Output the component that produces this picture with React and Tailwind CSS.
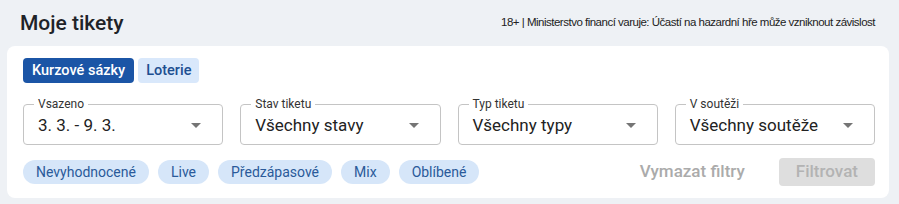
import React from 'react';

const FIELDS = [
  { label: 'Vsazeno', value: '3. 3. - 9. 3.' },
  { label: 'Stav tiketu', value: 'Všechny stavy' },
  { label: 'Typ tiketu', value: 'Všechny typy' },
  { label: 'V soutěži', value: 'Všechny soutěže' },
];

const CHIPS = ['Nevyhodnocené', 'Live', 'Předzápasové', 'Mix', 'Oblíbené'];

const ArrowDropDown = () => (
  <svg width="24" height="24" viewBox="0 0 24 24" fill="#757575">
    <path d="M7 10l5 5 5-5z" />
  </svg>
);

const SelectField = ({ label, value }) => (
  <div className="relative h-[41px] border border-[#c4c4c4] rounded-[4px] flex items-center justify-between pl-[14px] pr-[14px]">
    <span className="absolute -top-[8px] left-[10px] px-[4px] bg-white text-[12px] leading-[14px] text-[#333]">
      {label}
    </span>
    <span className="text-[17px] leading-[22px] text-[#222]">{value}</span>
    <ArrowDropDown />
  </div>
);

export default function App() {
  return (
    <div
      className="w-[899px] h-[204px] bg-[#eef1f5] pl-[7px] pr-[10px]"
      style={{ fontFamily: 'Roboto, "Noto Sans", sans-serif' }}
    >
      {/* Header */}
      <div className="h-[46px] flex items-center justify-between pl-[13px] pr-[14px]">
        <h1 className="text-[21px] font-medium text-[#1f2328] leading-none">Moje tikety</h1>
        <span
          className="text-[11.5px] text-[#222] tracking-[-0.5px]"
          style={{ fontFamily: '"Liberation Sans", Arial, sans-serif' }}
        >
          18+ | Ministerstvo financí varuje: Účastí na hazardní hře může vzniknout závislost
        </span>
      </div>

      {/* Filter card */}
      <div className="bg-white rounded-lg h-[152px] pl-[16px] pr-[14px] pt-[12px]">
        <div className="flex gap-[4px]">
          <button className="h-[25px] px-[9px] rounded-[4px] bg-[#1b55a6] text-white text-[14.5px] font-medium">
            Kurzové sázky
          </button>
          <button className="h-[25px] px-[8px] rounded-[4px] bg-[#d9e8fb] text-[#1d4f91] text-[14.5px] font-medium">
            Loterie
          </button>
        </div>

        <div className="grid grid-cols-4 gap-[17px] mt-[21px]">
          {FIELDS.map((f) => (
            <SelectField key={f.label} label={f.label} value={f.value} />
          ))}
        </div>

        <div className="flex items-center justify-between mt-[13px]">
          <div className="flex gap-[9px]">
            {CHIPS.map((c) => (
              <span
                key={c}
                className="h-[24px] px-[13px] rounded-full bg-[#d6e6f9] text-[#2a5a9a] text-[14px] flex items-center"
              >
                {c}
              </span>
            ))}
          </div>
          <div className="flex items-center gap-[17px]">
            <button className="h-[28px] px-[17px] text-[17px] font-medium text-[#ababab]">
              Vymazat filtry
            </button>
            <button className="h-[28px] px-[17px] rounded-[4px] bg-[#dedede] text-[17px] font-medium text-[#b3b3b3]">
              Filtrovat
            </button>
          </div>
        </div>
      </div>
    </div>
  );
}
